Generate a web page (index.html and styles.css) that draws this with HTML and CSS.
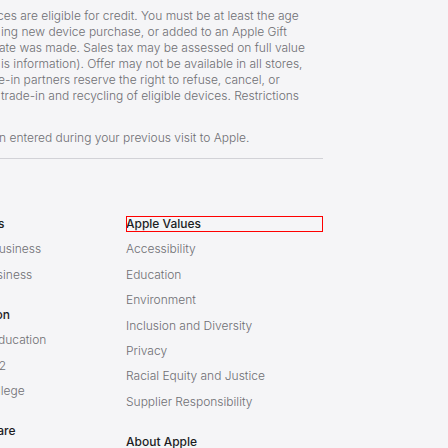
FILE: index.html
```html
<!DOCTYPE html>
<html lang="en">
<head>
<meta charset="utf-8">
<title>Apple Footer</title>
<link rel="stylesheet" href="styles.css">
</head>
<body>
<footer class="footer">
  <div class="footnotes">
    <p class="fn">
      <span class="line ind-a">ces are eligible for credit. You must be at least the age</span>
      <span class="line ind-b">ing new device purchase, or added to an Apple Gift</span>
      <span class="line ind-c">ate was made. Sales tax may be assessed on full value</span>
      <span class="line ind-b">is information). Offer may not be available in all stores,</span>
      <span class="line ind-d">e-in partners reserve the right to refuse, cancel, or</span>
      <span class="line ind-b">trade-in and recycling of eligible devices. Restrictions</span>
    </p>
    <p class="fn fn-last">
      <span class="line ind-c">n entered during your previous visit to Apple.</span>
    </p>
  </div>
  <nav class="directory">
    <div class="col">
      <div class="section">
        <h3 class="section-title">For Business</h3>
        <ul class="links">
          <li>Apple and Business</li>
          <li>Shop for Business</li>
        </ul>
      </div>
      <div class="section">
        <h3 class="section-title">For Education</h3>
        <ul class="links">
          <li>Apple and Education</li>
          <li>Shop for K-12</li>
          <li>Shop for College</li>
        </ul>
      </div>
      <div class="section">
        <h3 class="section-title">For Healthcare</h3>
      </div>
    </div>
    <div class="col">
      <div class="section">
        <h3 class="section-title is-focused">Apple Values</h3>
        <ul class="links">
          <li>Accessibility</li>
          <li>Education</li>
          <li>Environment</li>
          <li>Inclusion and Diversity</li>
          <li>Privacy</li>
          <li>Racial Equity and Justice</li>
          <li>Supplier Responsibility</li>
        </ul>
      </div>
      <div class="section">
        <h3 class="section-title">About Apple</h3>
      </div>
    </div>
  </nav>
</footer>
</body>
</html>
```
FILE: styles.css
```css
html, body {
  margin: 0;
  padding: 0;
  background: #f5f5f7;
  overflow: hidden;
}

body {
  width: 448px;
  height: 448px;
  font-family: Inter, "Liberation Sans", sans-serif;
  font-size: 12px;
  line-height: 16px;
  font-weight: 300;
}

.footer {
  width: 392px;
  margin-left: -69px;
}

.footnotes {
  padding: 8px 0 12px 69px;
  border-bottom: 1px solid #d2d2d7;
}

.fn {
  margin: 0;
  color: #6e6e73;
}

.fn-last {
  margin-top: 26px;
}

.line {
  display: block;
  white-space: nowrap;
}

.ind-a { text-indent: -3px; }
.ind-b { text-indent: 1px; }
.ind-c { text-indent: -1px; }
.ind-d { text-indent: -2px; }

.directory {
  display: grid;
  grid-template-columns: 195px 197px;
  padding-top: 57px;
}

.section + .section {
  margin-top: 24px;
}

.section-title {
  margin: 0;
  font-size: 12px;
  line-height: 16px;
  font-weight: 500;
  color: #1d1d1f;
}

.is-focused {
  outline: 1px solid #ff0000;
  outline-offset: -1px;
}

.links {
  list-style: none;
  margin: 0;
  padding: 0;
}

.links li {
  margin-top: 9.4px;
  color: #6e6e73;
  white-space: nowrap;
}
```
